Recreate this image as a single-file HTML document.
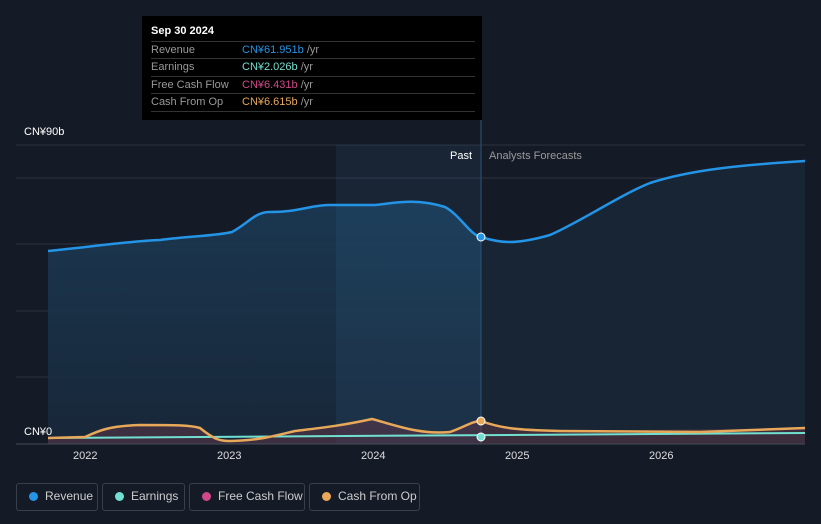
<!DOCTYPE html>
<html><head><meta charset="utf-8"><style>
body{margin:0;width:821px;height:524px;background:#151b26;font-family:"Liberation Sans",sans-serif;overflow:hidden;position:relative}
.tt{position:absolute;left:142px;top:16px;width:340px;height:104px;background:#000}
.tt .h{position:absolute;left:9px;top:9px;color:#fff;font-size:11px;font-weight:bold}
.row{position:absolute;left:9px;width:324px;height:17px;border-top:1px solid #333;font-size:11px;color:#999;line-height:16px}
.row span{position:absolute;left:91px}
.leg{position:absolute;top:483px;height:28px;border:1px solid #3a404b;border-radius:3px;color:#ccc;font-size:12px;line-height:25px;box-sizing:border-box}
.leg i{position:absolute;left:12px;top:8px;width:9px;height:9px;border-radius:50%}
.leg b{font-weight:normal;position:absolute;left:28px}
.ax{position:absolute;top:450px;color:#ddd;font-size:11px}
</style></head><body>
<svg width="821" height="524" style="position:absolute;left:0;top:0">
<defs><linearGradient id="g" x1="0" y1="0" x2="0" y2="1"><stop offset="0" stop-color="#1b3a55"/><stop offset="1" stop-color="#18283a"/></linearGradient></defs>
<g stroke="#2a3340" stroke-width="1">
<line x1="16" y1="145" x2="805" y2="145"/><line x1="16" y1="178" x2="805" y2="178"/><line x1="16" y1="244" x2="805" y2="244"/><line x1="16" y1="311" x2="805" y2="311"/><line x1="16" y1="377" x2="805" y2="377"/><line x1="16" y1="444" x2="805" y2="444"/></g>
<path d="M48,251 C90,247 130,241 160,240 C190,236 215,236 232,232 C250,222 255,212 270,212 C300,212 310,205 330,205 L375,205 C395,203 415,198 445,207 C460,215 470,235 481,237 L481,444 L48,444Z" fill="url(#g)" opacity="0.9"/>
<path d="M481,237 C500,243 515,245 550,235 C580,222 620,195 650,183 C690,170 740,165 805,161 L805,444 L481,444Z" fill="#182535"/>
<rect x="336" y="145" width="145" height="299" fill="#4aa0e0" opacity="0.08"/>
<line x1="481" y1="120" x2="481" y2="444" stroke="#2d5475"/>
<path d="M48,251 C90,247 130,241 160,240 C190,236 215,236 232,232 C250,222 255,212 270,212 C300,212 310,205 330,205 L375,205 C395,203 415,198 445,207 C460,215 470,235 481,237 C500,243 515,245 550,235 C580,222 620,195 650,183 C690,170 740,165 805,161" fill="none" stroke="#2394e6" stroke-width="2.5"/>
<path d="M48,438 L85,437 C100,430 110,426 140,425 C175,425 190,425 200,428 C215,440 220,441 230,441 C260,440 270,437 295,431 C320,428 340,426 372,419 C395,425 420,435 450,432 C465,427 472,421 481,421 C500,428 515,430 560,431 L805,428 L805,444 L48,444Z" fill="#6a3a4a" opacity="0.45"/>
<path d="M48,438 L805,433" stroke="#72e0d0" stroke-width="2" fill="none"/>
<path d="M48,438 L85,437 C100,430 110,426 140,425 C175,425 190,425 200,428 C215,440 220,441 230,441 C260,440 270,437 295,431 C320,428 340,426 372,419 C395,425 420,435 450,432 C465,427 472,421 481,421 C500,428 515,430 560,431 L700,432 L805,428" fill="none" stroke="#e8a85a" stroke-width="2.5"/>
<line x1="16" y1="444" x2="805" y2="444" stroke="#444c58"/>
<circle cx="481" cy="237" r="4" fill="#2394e6" stroke="#fff" stroke-width="1"/>
<circle cx="481" cy="421" r="4" fill="#e8a85a" stroke="#fff" stroke-width="1"/>
<circle cx="481" cy="437" r="4" fill="#72e0d0" stroke="#fff" stroke-width="1"/>
</svg>
<div style="position:absolute;left:24px;top:126px;color:#fff;font-size:11px">CN¥90b</div>
<div style="position:absolute;left:24px;top:426px;color:#fff;font-size:11px">CN¥0</div>
<div style="position:absolute;left:450px;top:150px;color:#fff;font-size:11px">Past</div>
<div style="position:absolute;left:489px;top:150px;color:#999;font-size:11px">Analysts Forecasts</div>
<div class="ax" style="left:73px">2022</div><div class="ax" style="left:217px">2023</div><div class="ax" style="left:361px">2024</div><div class="ax" style="left:505px">2025</div><div class="ax" style="left:649px">2026</div>
<div class="tt"><div class="h">Sep 30 2024</div>
<div class="row" style="top:25px">Revenue<span style="color:#2394e6">CN¥61.951b <em style="color:#999;font-style:normal">/yr</em></span></div>
<div class="row" style="top:42px">Earnings<span style="color:#72e0d0">CN¥2.026b <em style="color:#999;font-style:normal">/yr</em></span></div>
<div class="row" style="top:60px">Free Cash Flow<span style="color:#d0478a">CN¥6.431b <em style="color:#999;font-style:normal">/yr</em></span></div>
<div class="row" style="top:77px">Cash From Op<span style="color:#e8a85a">CN¥6.615b <em style="color:#999;font-style:normal">/yr</em></span></div>
<div class="row" style="top:95px;height:0"></div></div>
<div class="leg" style="left:16px;width:82px"><i style="background:#2394e6"></i><b>Revenue</b></div>
<div class="leg" style="left:102px;width:83px"><i style="background:#72e0d0"></i><b>Earnings</b></div>
<div class="leg" style="left:189px;width:116px"><i style="background:#d0478a"></i><b>Free Cash Flow</b></div>
<div class="leg" style="left:309px;width:111px"><i style="background:#e8a85a"></i><b>Cash From Op</b></div>
</body></html>
